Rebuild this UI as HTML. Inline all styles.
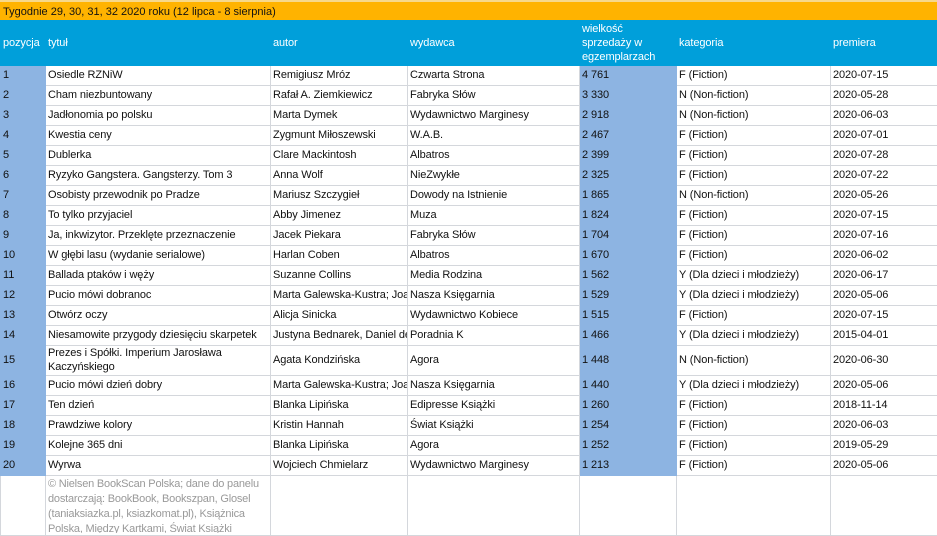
<!DOCTYPE html>
<html><head><meta charset="utf-8"><style>
*{margin:0;padding:0;box-sizing:border-box}
body{width:937px;height:533px;overflow:hidden;background:#fff;font-family:"Liberation Sans",Arial,sans-serif;font-size:11px;color:#111;position:relative}
.t{position:absolute;left:0;top:0;width:937px;height:20px;background:#FFB300;border-top:2px solid #f7d88a;padding:3px 3px;line-height:14px;white-space:nowrap}
table{position:absolute;left:0;top:20px;border-collapse:collapse;table-layout:fixed;width:937px}
td{border:1px solid #d4d7dc;height:20px;padding:0 2px;white-space:nowrap;overflow:hidden;line-height:13px;vertical-align:middle;letter-spacing:-0.1px}
tr.h td{background:#009FDA;color:#fff;height:45px;border-color:#009FDA;line-height:14px;white-space:normal}
td.b{background:#8DB4E2;border-color:#8DB4E2}
tr.h td.b{background:#009FDA;border-color:#009FDA}
td.w{white-space:normal;line-height:14px}
tr.f td{height:60px;vertical-align:top;background:#fff}
tr.f td.b2{border-color:#d4d7dc;background:#fff}
.ft{position:absolute;left:48px;top:477px;width:222px;height:56px;overflow:hidden;color:#999;line-height:15px;font-size:11px;letter-spacing:-0.2px}
</style></head><body>
<div class="t">Tygodnie 29, 30, 31, 32 2020 roku (12 lipca - 8 sierpnia)</div>
<table>
<colgroup><col style="width:45px"><col style="width:225px"><col style="width:137px"><col style="width:172px"><col style="width:97px"><col style="width:154px"><col style="width:107px"></colgroup>
<tr class="h"><td class="b">pozycja</td><td>tytuł</td><td>autor</td><td>wydawca</td><td class="b">wielkość sprzedaży w egzemplarzach</td><td>kategoria</td><td>premiera</td></tr>
<tr><td class="b">1</td><td>Osiedle RZNiW</td><td>Remigiusz Mróz</td><td>Czwarta Strona</td><td class="b">4 761</td><td>F (Fiction)</td><td>2020-07-15</td></tr>
<tr><td class="b">2</td><td>Cham niezbuntowany</td><td>Rafał A. Ziemkiewicz</td><td>Fabryka Słów</td><td class="b">3 330</td><td>N (Non-fiction)</td><td>2020-05-28</td></tr>
<tr><td class="b">3</td><td>Jadłonomia po polsku</td><td>Marta Dymek</td><td>Wydawnictwo Marginesy</td><td class="b">2 918</td><td>N (Non-fiction)</td><td>2020-06-03</td></tr>
<tr><td class="b">4</td><td>Kwestia ceny</td><td>Zygmunt Miłoszewski</td><td>W.A.B.</td><td class="b">2 467</td><td>F (Fiction)</td><td>2020-07-01</td></tr>
<tr><td class="b">5</td><td>Dublerka</td><td>Clare Mackintosh</td><td>Albatros</td><td class="b">2 399</td><td>F (Fiction)</td><td>2020-07-28</td></tr>
<tr><td class="b">6</td><td>Ryzyko Gangstera. Gangsterzy. Tom 3</td><td>Anna Wolf</td><td>NieZwykłe</td><td class="b">2 325</td><td>F (Fiction)</td><td>2020-07-22</td></tr>
<tr><td class="b">7</td><td>Osobisty przewodnik po Pradze</td><td>Mariusz Szczygieł</td><td>Dowody na Istnienie</td><td class="b">1 865</td><td>N (Non-fiction)</td><td>2020-05-26</td></tr>
<tr><td class="b">8</td><td>To tylko przyjaciel</td><td>Abby Jimenez</td><td>Muza</td><td class="b">1 824</td><td>F (Fiction)</td><td>2020-07-15</td></tr>
<tr><td class="b">9</td><td>Ja, inkwizytor. Przeklęte przeznaczenie</td><td>Jacek Piekara</td><td>Fabryka Słów</td><td class="b">1 704</td><td>F (Fiction)</td><td>2020-07-16</td></tr>
<tr><td class="b">10</td><td>W głębi lasu (wydanie serialowe)</td><td>Harlan Coben</td><td>Albatros</td><td class="b">1 670</td><td>F (Fiction)</td><td>2020-06-02</td></tr>
<tr><td class="b">11</td><td>Ballada ptaków i węży</td><td>Suzanne Collins</td><td>Media Rodzina</td><td class="b">1 562</td><td>Y (Dla dzieci i młodzieży)</td><td>2020-06-17</td></tr>
<tr><td class="b">12</td><td>Pucio mówi dobranoc</td><td>Marta Galewska-Kustra; Joanna</td><td>Nasza Księgarnia</td><td class="b">1 529</td><td>Y (Dla dzieci i młodzieży)</td><td>2020-05-06</td></tr>
<tr><td class="b">13</td><td>Otwórz oczy</td><td>Alicja Sinicka</td><td>Wydawnictwo Kobiece</td><td class="b">1 515</td><td>F (Fiction)</td><td>2020-07-15</td></tr>
<tr><td class="b">14</td><td>Niesamowite przygody dziesięciu skarpetek</td><td>Justyna Bednarek, Daniel de Latour</td><td>Poradnia K</td><td class="b">1 466</td><td>Y (Dla dzieci i młodzieży)</td><td>2015-04-01</td></tr>
<tr><td class="b" style="height:29.5px">15</td><td class="w">Prezes i Spółki. Imperium Jarosława Kaczyńskiego</td><td>Agata Kondzińska</td><td>Agora</td><td class="b">1 448</td><td>N (Non-fiction)</td><td>2020-06-30</td></tr>
<tr><td class="b">16</td><td>Pucio mówi dzień dobry</td><td>Marta Galewska-Kustra; Joanna</td><td>Nasza Księgarnia</td><td class="b">1 440</td><td>Y (Dla dzieci i młodzieży)</td><td>2020-05-06</td></tr>
<tr><td class="b">17</td><td>Ten dzień</td><td>Blanka Lipińska</td><td>Edipresse Książki</td><td class="b">1 260</td><td>F (Fiction)</td><td>2018-11-14</td></tr>
<tr><td class="b">18</td><td>Prawdziwe kolory</td><td>Kristin Hannah</td><td>Świat Książki</td><td class="b">1 254</td><td>F (Fiction)</td><td>2020-06-03</td></tr>
<tr><td class="b">19</td><td>Kolejne 365 dni</td><td>Blanka Lipińska</td><td>Agora</td><td class="b">1 252</td><td>F (Fiction)</td><td>2019-05-29</td></tr>
<tr><td class="b">20</td><td>Wyrwa</td><td>Wojciech Chmielarz</td><td>Wydawnictwo Marginesy</td><td class="b">1 213</td><td>F (Fiction)</td><td>2020-05-06</td></tr>
<tr class="f"><td class="b2"></td><td></td><td></td><td></td><td class="b2"></td><td></td><td></td></tr>
</table>
<div class="ft">© Nielsen BookScan Polska; dane do panelu<br>dostarczają: BookBook, Bookszpan, Glosel<br>(taniaksiazka.pl, ksiazkomat.pl), Książnica<br>Polska, Między Kartkami, Świat Książki</div>
</body></html>
